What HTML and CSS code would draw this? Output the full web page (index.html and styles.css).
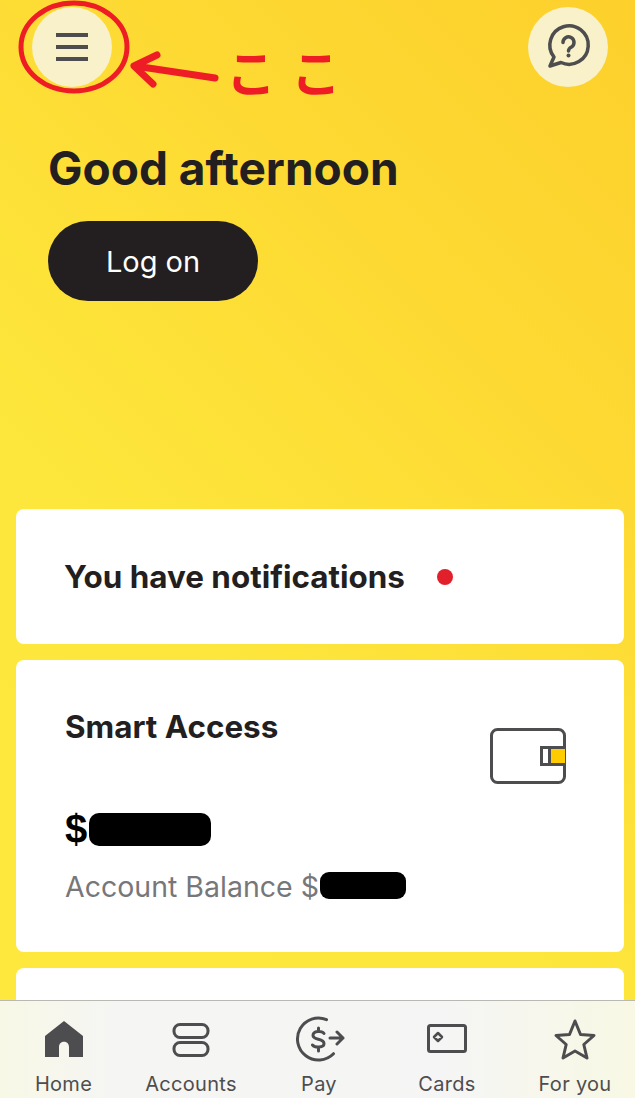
FILE: index.html
```html
<!DOCTYPE html>
<html>
<head>
    <title>Home</title>
    <link rel="stylesheet" href="styles.css">
</head>
<body>
<div class="page">
    <div class="top-bar">
        <div class="round-btn">
            <svg width="80" height="80" viewBox="0 0 80 80"><path class="ico bars" stroke-width="4" d="M24 28H56M24 40H56M24 52H56"/></svg>
        </div>
        <div class="round-btn">
            <svg width="80" height="80" viewBox="0 0 80 80"><path class="ico" stroke-width="3.500" d="M22 59L26 50A19.200 19.200 0 1 1 33 55.500Z"/><path class="ico" stroke-width="3.500" d="M35 35.500A5.500 5.500 0 1 1 43.500 40C41.500 41 40.500 42 40.500 44"/><circle cx="40.500" cy="48.500" r="2" fill="#4d4d4f"/></svg>
        </div>
    </div>

    <div class="greeting">
        <h1>Good afternoon</h1>
        <div class="log-on">Log on</div>
    </div>

    <div class="cards">
        <div class="card card-notify">
            <span class="notify-text">You have notifications</span>
            <span class="red-dot"></span>
        </div>
        <div class="card card-account">
            <div class="account-top">
                <div class="account-name">Smart Access</div>
                <svg class="wallet" width="76" height="56" viewBox="0 0 76 56">
                    <rect x="1.500" y="1.500" width="73" height="53" rx="6" fill="#fff" stroke="#4d4d4f" stroke-width="3"/>
                    <rect x="51.500" y="19.500" width="23" height="17" fill="#fff" stroke="#4d4d4f" stroke-width="3"/>
                    <rect x="61" y="21" width="14" height="14" fill="#ffcc00"/>
                    <rect x="58" y="19" width="3" height="18" fill="#4d4d4f"/>
                </svg>
            </div>
            <div class="amount">$<span class="blob blob-big"></span></div>
            <div class="balance">Account Balance $<span class="blob blob-small"></span></div>
        </div>
        <div class="card card-next"></div>
    </div>

    <div class="tab-bar">
        <div class="tab">
            <svg width="48" height="48" viewBox="0 0 48 48"><path fill="#4d4d4f" d="M24 5L5 20V41H19V31C19 24 29 24 29 31V41H43V20Z"/></svg>
            <span>Home</span>
        </div>
        <div class="tab">
            <svg width="48" height="48" viewBox="0 0 48 48"><rect class="ico" stroke-width="3" x="7" y="8.500" width="34" height="13" rx="6"/><rect class="ico" stroke-width="3" x="7" y="26.500" width="34" height="13" rx="6"/></svg>
            <span>Accounts</span>
        </div>
        <div class="tab">
            <svg width="52" height="48" viewBox="0 0 52 48"><path class="ico" stroke-width="3" d="M33.500 3.600A21 21 0 1 0 40.500 37.700"/><path class="ico" stroke-width="3" d="M31 17.500C29 14.500 20 14.500 20 19.500C20 24.500 31 22 31 27.500C31 32 22 32 19.500 29M25.500 12V15M25.500 32V35M37 22H50M44 16L50 22L44 28"/></svg>
            <span>Pay</span>
        </div>
        <div class="tab">
            <svg width="48" height="48" viewBox="0 0 48 48"><rect class="ico" stroke-width="3" x="5.500" y="9.500" width="37" height="26" rx="2"/><path class="ico" stroke-width="2.500" d="M15 17L19 21L15 25L11 21Z"/></svg>
            <span>Cards</span>
        </div>
        <div class="tab">
            <svg width="48" height="48" viewBox="0 0 48 48"><path class="ico" stroke-width="3" d="M24 5L29.500 18.500L43 19.500L32.800 28.500L36 42L24 35L12 42L15.200 28.500L5 19.500L18.500 18.500Z"/></svg>
            <span>For you</span>
        </div>
    </div>

    <!-- red markup drawn on top of the screenshot -->
    <svg class="markup" width="635" height="110" viewBox="0 0 635 110">
        <ellipse cx="74" cy="47" rx="53" ry="44" fill="none" stroke="#ee1c25" stroke-width="5"/>
        <path d="M215 78L135 66M157 55L134 66L153 84" fill="none" stroke="#ee1c25" stroke-width="7" stroke-linecap="round" stroke-linejoin="round"/>
    </svg>
    <div class="koko">ここ</div>
</div>
</body>
</html>
```

FILE: styles.css
```css
html, body {
    margin: 0;
    padding: 0;
}

.page {
    position: relative;
    width: 635px;
    height: 1098px;
    overflow: hidden;
    background: linear-gradient(225deg, #fdd02c 0%, #fdda33 30%, #fde73c 62%, #fee83e 100%);
    font-family: Inter, "Noto Sans CJK JP", sans-serif;
    color: #231f20;
}

.ico {
    fill: none;
    stroke: #4d4d4f;
    stroke-linecap: round;
    stroke-linejoin: round;
}

.bars {
    stroke-linecap: butt;
}

.top-bar {
    display: flex;
    justify-content: space-between;
    padding: 7px 27px 0 32px;
}

.round-btn {
    width: 80px;
    height: 80px;
    border-radius: 50%;
    background-color: #f8f1c9;
}

.round-btn svg {
    display: block;
}

.greeting {
    padding: 51px 0 0 48px;
}

.greeting h1 {
    margin: 0;
    font-size: 46px;
    line-height: 60px;
    font-weight: 700;
}

.log-on {
    width: 210px;
    height: 80px;
    margin-top: 23px;
    border-radius: 40px;
    background-color: #231f20;
    color: #fff;
    font-size: 29px;
    line-height: 81px;
    text-align: center;
}

.cards {
    display: flex;
    flex-direction: column;
    gap: 16px;
    padding: 208px 11px 0 16px;
}

.card {
    background-color: #fff;
    border-radius: 8px;
}

.card-notify {
    display: flex;
    align-items: center;
    height: 135px;
    padding-left: 48px;
}

.notify-text {
    font-size: 31.400px;
    font-weight: 700;
}

.red-dot {
    width: 16px;
    height: 16px;
    margin-left: 32px;
    border-radius: 50%;
    background-color: #e2202c;
}

.card-account {
    height: 292px;
    padding: 0 58px 0 49px;
}

.account-top {
    display: flex;
    justify-content: space-between;
    align-items: flex-start;
    padding-top: 48px;
}

.account-name {
    font-size: 31.400px;
    line-height: 38px;
    font-weight: 700;
}

.wallet {
    margin-top: 20px;
}

.amount {
    display: flex;
    align-items: center;
    margin-top: 23px;
    font-family: "Liberation Sans", sans-serif;
    font-size: 40px;
    font-weight: 700;
    line-height: 44px;
    color: #000;
}

.balance {
    display: flex;
    align-items: center;
    margin-top: 18px;
    font-size: 28.500px;
    line-height: 36px;
    color: #77777a;
}

.blob {
    display: block;
    background-color: #000;
}

.blob-big {
    width: 122px;
    height: 33px;
    margin-left: 2px;
    border-radius: 10px;
}

.blob-small {
    width: 86px;
    height: 27px;
    margin: 0 0 3px 1px;
    border-radius: 9px;
}

.card-next {
    height: 200px;
}

.tab-bar {
    position: absolute;
    left: 0;
    right: 0;
    bottom: 0;
    display: grid;
    grid-template-columns: 127px repeat(4, 128px);
    height: 97px;
    border-top: 1px solid #b9b9b4;
    background: linear-gradient(90deg, #f8f8e6 0%, #f5f5f4 18%, #f5f5f5 70%, #f8f8e4 100%);
}

.tab {
    display: flex;
    flex-direction: column;
    align-items: center;
    padding-top: 15px;
    color: #4d4d4f;
    font-size: 20px;
    line-height: 24px;
    letter-spacing: 0.300px;
}

.tab svg {
    display: block;
    margin-bottom: 8px;
}

.markup {
    position: absolute;
    top: 0;
    left: 0;
}

.koko {
    position: absolute;
    top: 44px;
    left: 226px;
    font-size: 50px;
    line-height: 60px;
    font-weight: 700;
    letter-spacing: 15px;
    color: #ee1c25;
}
```
